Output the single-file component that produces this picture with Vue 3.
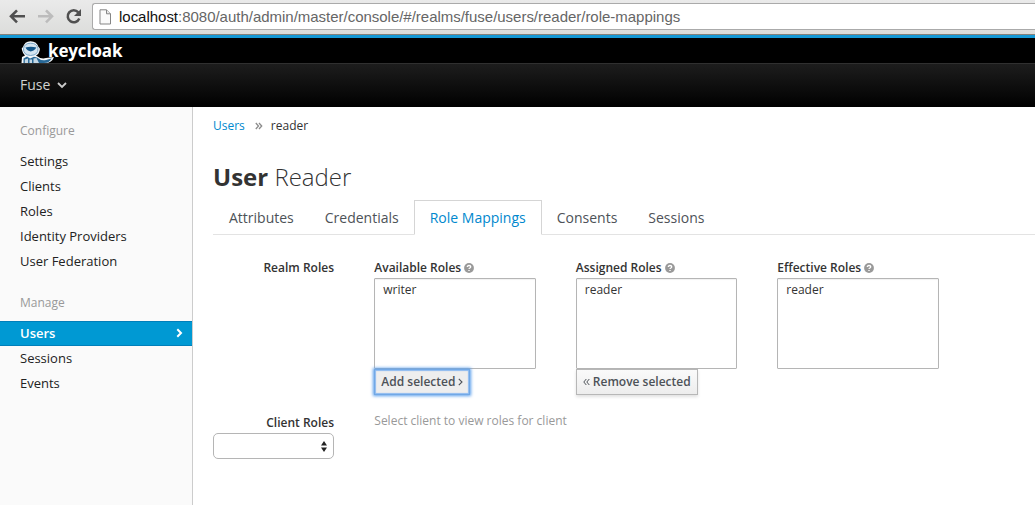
<script setup>
const configure = ['Settings', 'Clients', 'Roles', 'Identity Providers', 'User Federation']
const manage = ['Users', 'Sessions', 'Events']
const tabs = ['Attributes', 'Credentials', 'Role Mappings', 'Consents', 'Sessions']
const lists = [
  { title: 'Available Roles', role: 'writer', action: 'add' },
  { title: 'Assigned Roles', role: 'reader', action: 'remove' },
  { title: 'Effective Roles', role: 'reader', action: '' },
]
</script>

<template>
  <div class="window">
    <div class="browser">
      <svg class="controls" width="84" height="34" viewBox="0 0 84 34" fill="none">
        <path d="M11.500 16.300H25M17 10.300L11 16.300L17 22.300" stroke="#505050" stroke-width="2.600" />
        <path d="M38 16.300H51.500M46 10.300L52 16.300L46 22.300" stroke="#bcbcbc" stroke-width="2.600" />
        <path d="M78.300 12.400A6 6 0 1 0 79.300 18.600" stroke="#505050" stroke-width="2.500" />
        <path d="M81 9V16H74Z" fill="#505050" />
      </svg>
      <div class="address">
        <svg width="13" height="16" viewBox="0 0 13 16">
          <path d="M1 .8H7.500L11.500 4.800V15H1Z" fill="#fafafa" stroke="#858585" />
          <path d="M7.500 .8V4.800H11.500" fill="#e8e8e8" stroke="#858585" />
        </svg>
        <span class="url"><b>localhost</b>:8080/auth/admin/master/console/#/realms/fuse/users/reader/role-mappings</span>
      </div>
    </div>

    <header class="brand">
      <svg width="34" height="23" viewBox="0 0 34 23">
        <path d="M1.500 23L2 17L5 15.500Q2.500 13 2 10Q1 8 3 7Q4.500 1.500 10.500 1.200Q17 1.500 18.500 7Q20.500 8 19.500 11Q19 14 16 15.500Q21 19.500 26 18L34 17Q32 23 25 23Z" fill="#f5f8fa" />
        <path d="M3.500 8.500Q4.500 3.200 10.700 3.200Q17 3.200 18 8.500Q18.500 15 10.700 15.500Q3 15 3.500 8.500Z" fill="#d3e4f0" stroke="#6f9ec2" stroke-width=".9" />
        <path d="M5.500 7.500Q10.700 6.200 16.300 7.500Q15.800 9 13.500 10.500L10.700 11.500L8 10.500Q6 9 5.500 7.500Z" fill="#12568a" />
        <path d="M3.500 23V18.500L7 16.500L10 18.500L14 16.700L17 17.500Q21 21 26 20L31.500 18.500Q29.500 23 24 23Z" fill="#286896" />
        <path d="M4.800 19.500L8 18.500V23H4.800ZM13.500 18.500L16.500 18L19 23H13.500ZM9.500 19.500H12V23H9.500Z" fill="#c4d7e4" />
      </svg>
      <span class="wordmark">keycloak</span>
    </header>
    <nav class="realm">
      <span>Fuse</span>
      <svg width="10" height="8" viewBox="0 0 10 8"><path d="M1 2L5 6L9 2" fill="none" stroke="#ccc" stroke-width="1.800" /></svg>
    </nav>

    <div class="body">
      <aside>
        <h2>Configure</h2>
        <ul><li v-for="item in configure" :key="item">{{ item }}</li></ul>
        <h2 class="second">Manage</h2>
        <ul>
          <li v-for="item in manage" :key="item" :class="{ active: item === 'Users' }">
            {{ item }}
            <svg v-if="item === 'Users'" width="7" height="10" viewBox="0 0 7 10"><path d="M1.300 1.300L5 5L1.300 8.700" fill="none" stroke="#fff" stroke-width="2" /></svg>
          </li>
        </ul>
      </aside>

      <main>
        <div class="crumbs">
          <a>Users</a>
          <svg width="8" height="8" viewBox="0 0 8 8"><path d="M.8 1L3.500 4L.8 7M4 1L6.700 4L4 7" fill="none" stroke="#8c8c8c" stroke-width="1.300" /></svg>
          <span>reader</span>
        </div>
        <h1><strong>User</strong> <span>Reader</span></h1>
        <div class="tabs">
          <div v-for="tab in tabs" :key="tab" class="tab" :class="{ current: tab === 'Role Mappings' }">{{ tab }}</div>
        </div>
        <div class="form">
          <div class="label">Realm Roles</div>
          <section v-for="list in lists" :key="list.title">
            <div class="title">
              <span>{{ list.title }}</span>
              <svg width="10" height="10" viewBox="0 0 10 10">
                <circle cx="5" cy="5" r="4.900" fill="#999" />
                <path d="M3.300 4Q3.300 2.500 5 2.500T6.700 3.900C6.700 5 5 4.900 5 6.100" fill="none" stroke="#fff" stroke-width="1.300" />
                <path d="M4.300 6.900H5.700V8.100H4.300Z" fill="#fff" />
              </svg>
            </div>
            <div class="list">{{ list.role }}</div>
            <button v-if="list.action === 'add'" class="focused">
              <span>Add selected</span>
              <svg width="5" height="8" viewBox="0 0 5 8"><path d="M.8 .8L4 4L.8 7.200" fill="none" stroke="#4d5258" stroke-width="1.100" /></svg>
            </button>
            <button v-if="list.action === 'remove'">
              <svg width="7" height="8" viewBox="0 0 7 8"><path d="M3.300 1L.8 4L3.300 7M6.300 1L3.800 4L6.300 7" fill="none" stroke="#4d5258" /></svg>
              <span>Remove selected</span>
            </button>
          </section>
        </div>
        <div class="client">
          <div>
            <div class="label">Client Roles</div>
            <div class="select">
              <svg width="6" height="11" viewBox="0 0 6 11"><path d="M0 4.500L3 0L6 4.500ZM0 6.500H6L3 11Z" fill="#222" /></svg>
            </div>
          </div>
          <p>Select client to view roles for client</p>
        </div>
      </main>
    </div>
  </div>
</template>

<style>
body { margin: 0; overflow: hidden; }
</style>

<style scoped>
* { box-sizing: border-box; }
svg { display: block; flex: none; }
.window { width: 1035px; height: 505px; overflow: hidden; background: #fff; color: #333; font: 13px/20px "Open Sans", sans-serif; display: flex; flex-direction: column; }
.browser { height: 35px; flex: none; display: flex; background: linear-gradient(#eaeaea, #dcdddb); border-bottom: 1px solid #83827c; }
.address { flex: 1; height: 27px; margin: 3px 0 0 8px; padding-left: 6px; background: #fff; border: 1px solid #aaa; border-right: 0; border-radius: 3px 0 0 3px; display: flex; align-items: center; }
.url { margin-left: 7px; color: #666; font: 15px/20px "Liberation Sans", Arial, sans-serif; letter-spacing: -.02px; white-space: nowrap; }
.url b { font-weight: 400; color: #111; }
.brand { height: 28px; flex: none; background: #000; border-top: 3px solid #1599d6; display: flex; padding: 2px 0 0 20px; }
.wordmark { color: #fff; font-size: 17px; font-weight: 700; line-height: 21px; letter-spacing: -.15px; margin-left: -6px; }
.realm { height: 44px; flex: none; background: linear-gradient(#1d1d1d, #000); border-top: 1px solid #303030; display: flex; align-items: center; padding: 0 0 2px 20px; gap: 7px; color: #d1d1d1; font-size: 14px; }
.body { display: flex; flex: 1; }
aside { width: 193px; flex: none; background: #fafafa; border-right: 1px solid #ccc; }
h2 { margin: 14px 0 8px 20px; font-size: 12px; line-height: 20px; font-weight: 400; color: #999; }
h2.second { margin-top: 19px; margin-bottom: 8px; }
ul { list-style: none; margin: 0; padding: 0; }
li { height: 25px; padding: 0 9px 2px 20px; display: flex; align-items: center; justify-content: space-between; color: #222; }
li.active { background: #0099d3; border-top: 1px solid #007fba; border-bottom: 1px solid #007fba; color: #fff; font-weight: 600; padding-bottom: 1px; line-height: 19px; }
main { flex: 1; padding-left: 20px; }
.crumbs { display: flex; align-items: center; height: 20px; margin-top: 9px; font-size: 12px; }
.crumbs a { color: #0088ce; margin-right: 10px; }
.crumbs svg { margin-right: 8px; }
h1 { margin: 25px 0 8px; font-size: 24px; line-height: 31px; font-weight: 300; }
h1 strong { font-weight: 700; }
.tabs { height: 35px; display: flex; border-bottom: 1px solid #e3e3e3; font-size: 14px; color: #4d5258; }
.tab { height: 35px; padding: 0 15px; border: 1px solid transparent; line-height: 34px; }
.tab + .tab { margin-left: -1px; }
.tab.current { color: #0088ce; background: #fff; border-color: #d5d5d5; border-bottom-color: #fff; }
.form { display: grid; grid-template-columns: 121.300px 161.500px 161.500px 161.500px; column-gap: 40px; margin-top: 23px; height: 154px; }
.label { width: 121px; text-align: right; font-size: 12px; font-weight: 600; line-height: 20px; }
.title { display: flex; align-items: center; height: 20px; font-size: 12px; font-weight: 600; gap: 3px; white-space: nowrap; }
.list { height: 91px; border: 1px solid #b5b5b5; border-radius: 1px; padding: 2px 8px; font-size: 12px; box-shadow: inset 0 1px 1px rgba(0,0,0,.06); line-height: 18px; }
button { height: 26px; padding: 0 6px; border: 1px solid #b7b7b7; background: linear-gradient(#fafafa, #ededed); box-shadow: 0 2px 3px rgba(0,0,0,.12); display: flex; align-items: center; gap: 3px; color: #4d5258; font: 600 12px/20px "Open Sans", sans-serif; white-space: nowrap; }
button.focused { background: #eee; border-color: #72a8e5; box-shadow: 0 0 3px 1px #5b9fec, inset 0 0 1px 1px #8cbaf0; }
.client { display: flex; gap: 40.300px; margin-top: 1px; }
.select { width: 121px; height: 26px; border: 1px solid #b5b5b5; border-radius: 5px; display: flex; align-items: center; justify-content: flex-end; padding-right: 6px; }
p { margin: -2px 0 0; color: #999; font-size: 12px; }
</style>
